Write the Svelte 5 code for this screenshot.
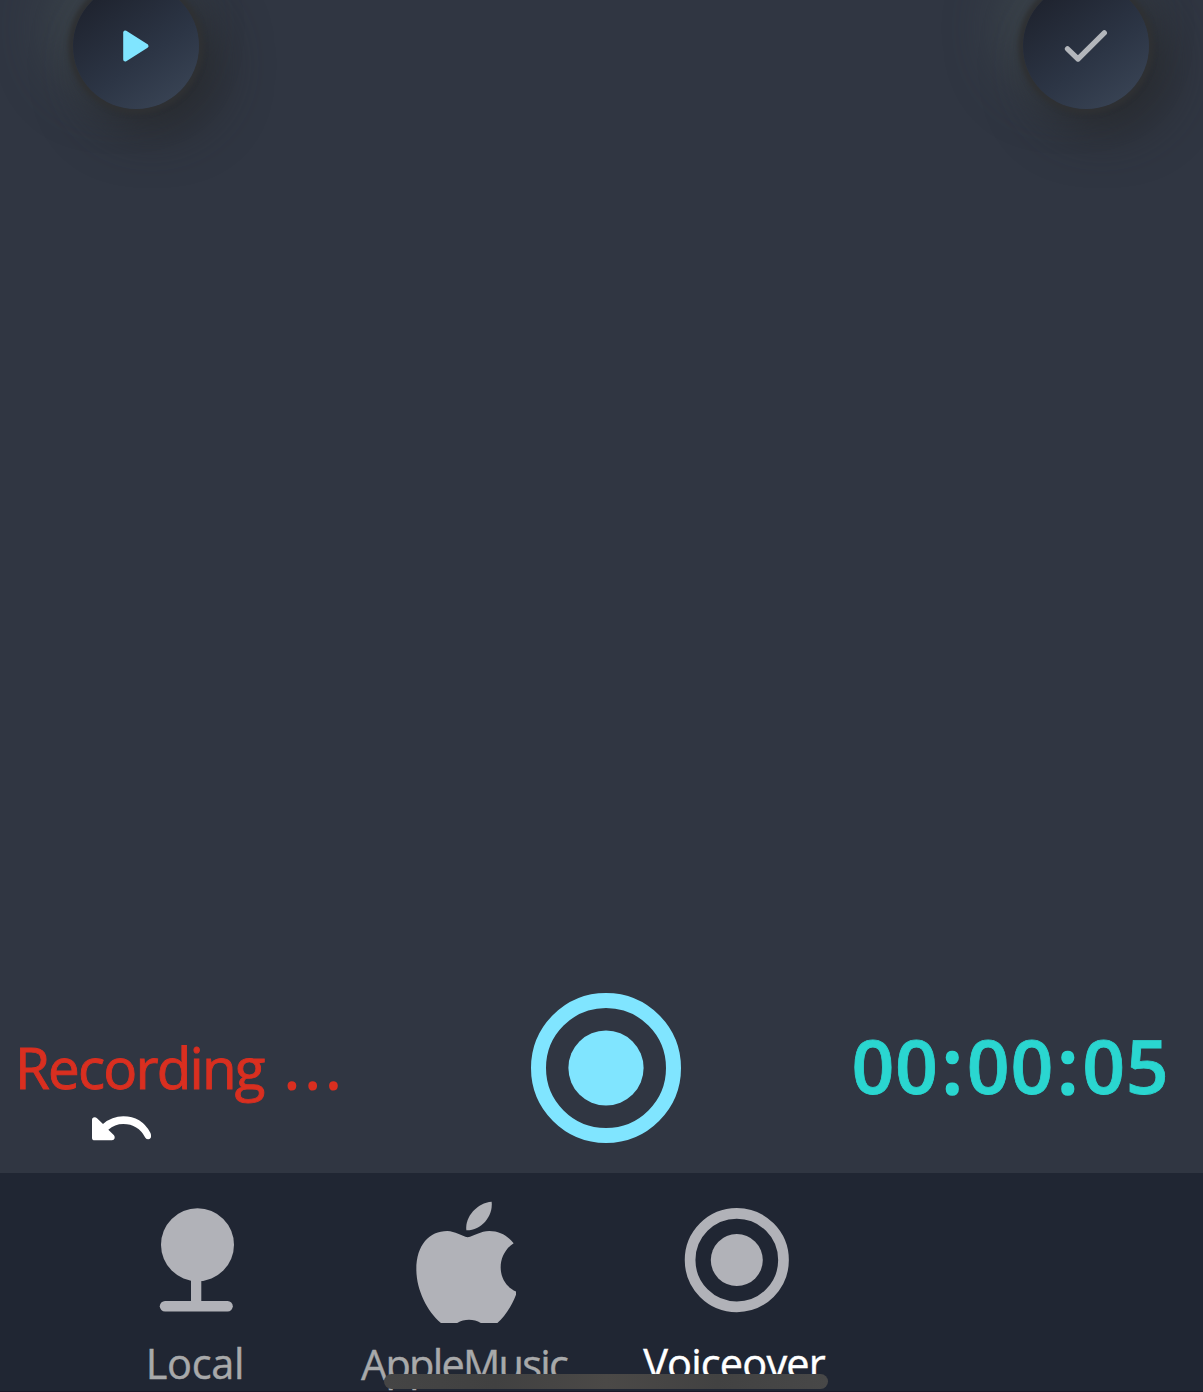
<script>
  const time = '00:00:05';
  const tabs = [
    { id: 'local', label: 'Local' },
    { id: 'music', label: 'AppleMusic' },
    { id: 'voice', label: 'Voiceover' }
  ];
  let active = $state('voice');
</script>

<div class="screen">
  <main>
    <header>
      <button class="knob" aria-label="Play">
        <svg class="play" width="28" height="34" viewBox="0 0 28 34">
          <path d="M3.200 3.500 V30.500 L24.500 17 Z" />
        </svg>
      </button>
      <button class="knob" aria-label="Done">
        <svg class="check" width="44" height="34" viewBox="0 0 44 34">
          <path d="M3.500 19.800 L14 30 L40.300 3.900" />
        </svg>
      </button>
    </header>

    <section class="recorder">
      <div class="status">
        <span class="state">Recording <span class="dots">...</span></span>
        <button class="undo" aria-label="Undo">
          <svg width="60" height="26" viewBox="276 287 180 78">
            <path d="M276 299 Q276 291 284 291 Q288 291 291 294 L309 311 Q336 288 370 288 Q424 288 451 337 Q453 341 453 345 V351 Q451 357 445 357 Q439 357 436 352 Q414 311 370 311 Q344 311 325 328 L342 345 Q345 349 344 354 Q342 360 336 360 H284 Q276 360 276 352 Z" />
          </svg>
        </button>
      </div>
      <button class="record" aria-label="Record">
        <svg width="150" height="150" viewBox="0 0 150 150">
          <circle class="ring" cx="75" cy="75" r="67.500" />
          <circle cx="75" cy="75" r="37.600" />
        </svg>
      </button>
      <div class="timer">
        {#each time as c}<span class:colon={c === ':'}>{c}</span>{/each}
      </div>
    </section>
  </main>

  <nav>
    {#each tabs as tab}
      <button class="tab {tab.id}" class:active={active === tab.id} onclick={() => (active = tab.id)}>
        <span class="icon">
          {#if tab.id === 'local'}
            <svg width="76" height="104" viewBox="0 0 76 104">
              <circle cx="38.500" cy="36.700" r="36.500" />
              <path d="M32 70 H42.300 V94 H32 Z" />
              <rect x="0.800" y="93" width="73" height="10.500" rx="5.250" />
            </svg>
          {:else if tab.id === 'music'}
            <svg width="100" height="123" viewBox="228 30 300 369">
              <path d="M383 142 C365 138 345 124 322 123 C268 123 229 165 229 238 C229 300 262 365 304 400 H350 C372 386 402 386 424 400 H471 C495 378 515 350 531 306 C500 293 482 265 482 232 C482 203 497 175 521 160 C503 137 478 123 448 123 C422 123 402 138 383 142 Z" />
              <path d="M455 35 C412 38 374 80 379 121 C422 122 460 80 455 35 Z" />
            </svg>
          {:else}
            <svg width="105" height="105" viewBox="0 0 105 105">
              <circle class="ring" cx="52.800" cy="52.100" r="46.700" />
              <circle cx="52.800" cy="52.100" r="26" />
            </svg>
          {/if}
        </span>
        <span class="label">{tab.label}</span>
      </button>
    {/each}
  </nav>
  <div class="home-indicator"></div>
</div>

<style>
  :global(body) { background: #303642; }
  button { border: 0; padding: 0; background: none; font: inherit; color: inherit; }
  svg { display: block; }
  .screen {
    position: relative;
    display: flex;
    flex-direction: column;
    width: 1203px;
    height: 1392px;
    overflow: hidden;
    background: #303642;
    font-family: 'Open Sans', 'Noto Sans', sans-serif;
  }
  main {
    flex: 1;
    display: flex;
    flex-direction: column;
    justify-content: space-between;
    overflow: hidden;
  }
  header {
    display: flex;
    justify-content: space-between;
    margin-top: -17px;
    padding: 0 54px 0 73px;
  }
  .knob {
    display: grid;
    place-items: center;
    width: 126px;
    height: 126px;
    border-radius: 50%;
    background: linear-gradient(145deg, #1d212c 8%, #2c3545 58%, #3b4657 96%);
    box-shadow:
      0 0 4px 5px #2f3134,
      16px 18px 50px 4px rgba(36, 38, 39, 0.75),
      -18px -18px 50px 6px rgba(66, 75, 80, 0.75);
  }
  .play { fill: #80e5ff; stroke: #80e5ff; stroke-width: 4; stroke-linejoin: round; }
  .check { fill: none; stroke: #b3b6bb; stroke-width: 5.300; stroke-linecap: round; stroke-linejoin: round; }

  .recorder {
    display: grid;
    grid-template-columns: 531px 150px 1fr;
    height: 180px;
  }
  .status { padding: 44px 0 0 15px; }
  .state {
    display: block;
    height: 79px;
    color: #d92f20;
    font-size: 56.500px;
    line-height: 62px;
    letter-spacing: -1.800px;
    white-space: pre;
    -webkit-text-stroke: 0.900px #d92f20;
  }
  .dots {
    margin-left: 8px;
    letter-spacing: 5.900px;
    -webkit-text-stroke-width: 2.200px;
  }
  .undo { display: block; margin-left: 77px; fill: #fff; }
  .record { height: 150px; fill: #80e5ff; }
  .ring { fill: none; stroke: #80e5ff; stroke-width: 15; }
  .timer {
    display: flex;
    padding: 34px 0 0 170px;
    color: #2ad6d0;
    font-size: 75px;
    font-weight: 600;
    line-height: 76px;
    -webkit-text-stroke: 0.800px #2ad6d0;
  }
  .timer span { width: 43.700px; text-align: center; }
  .timer .colon { width: 28px; -webkit-text-stroke-width: 2.400px; }

  nav {
    display: flex;
    height: 219px;
    padding-left: 61px;
    box-sizing: border-box;
    background: #202633;
    border-bottom: 1px solid #1b1728;
  }
  .tab {
    display: flex;
    flex-direction: column;
    align-items: center;
    width: 270px;
    color: #a8a9aa;
    fill: #b1b2b8;
  }
  .tab.active { color: #fff; }
  .tab .ring { stroke: #b1b2b8; stroke-width: 10.700; }
  .icon {
    display: flex;
    flex-direction: column;
    align-items: center;
    height: 150px;
    padding-top: 35px;
    box-sizing: border-box;
  }
  .local .icon { padding-left: 1px; }
  .music .icon { padding-top: 27px; }
  .voice .icon { padding-left: 1px; }
  .label {
    height: 69px;
    font-size: 41.500px;
    line-height: 83px;
    letter-spacing: -0.300px;
    -webkit-text-stroke: 0.400px currentColor;
  }
  .local .label { padding-right: 2px; }
  .music .label { padding-right: 4px; letter-spacing: -1.750px; }
  .voice .label { padding-right: 4px; letter-spacing: -0.850px; }
  .home-indicator {
    position: absolute;
    left: 384px;
    top: 1374px;
    width: 444px;
    height: 15px;
    border-radius: 8px;
    background: linear-gradient(90deg, #454545, #414141 25%, #4b4947 50%, #424242 75%, #484848);
  }
</style>
